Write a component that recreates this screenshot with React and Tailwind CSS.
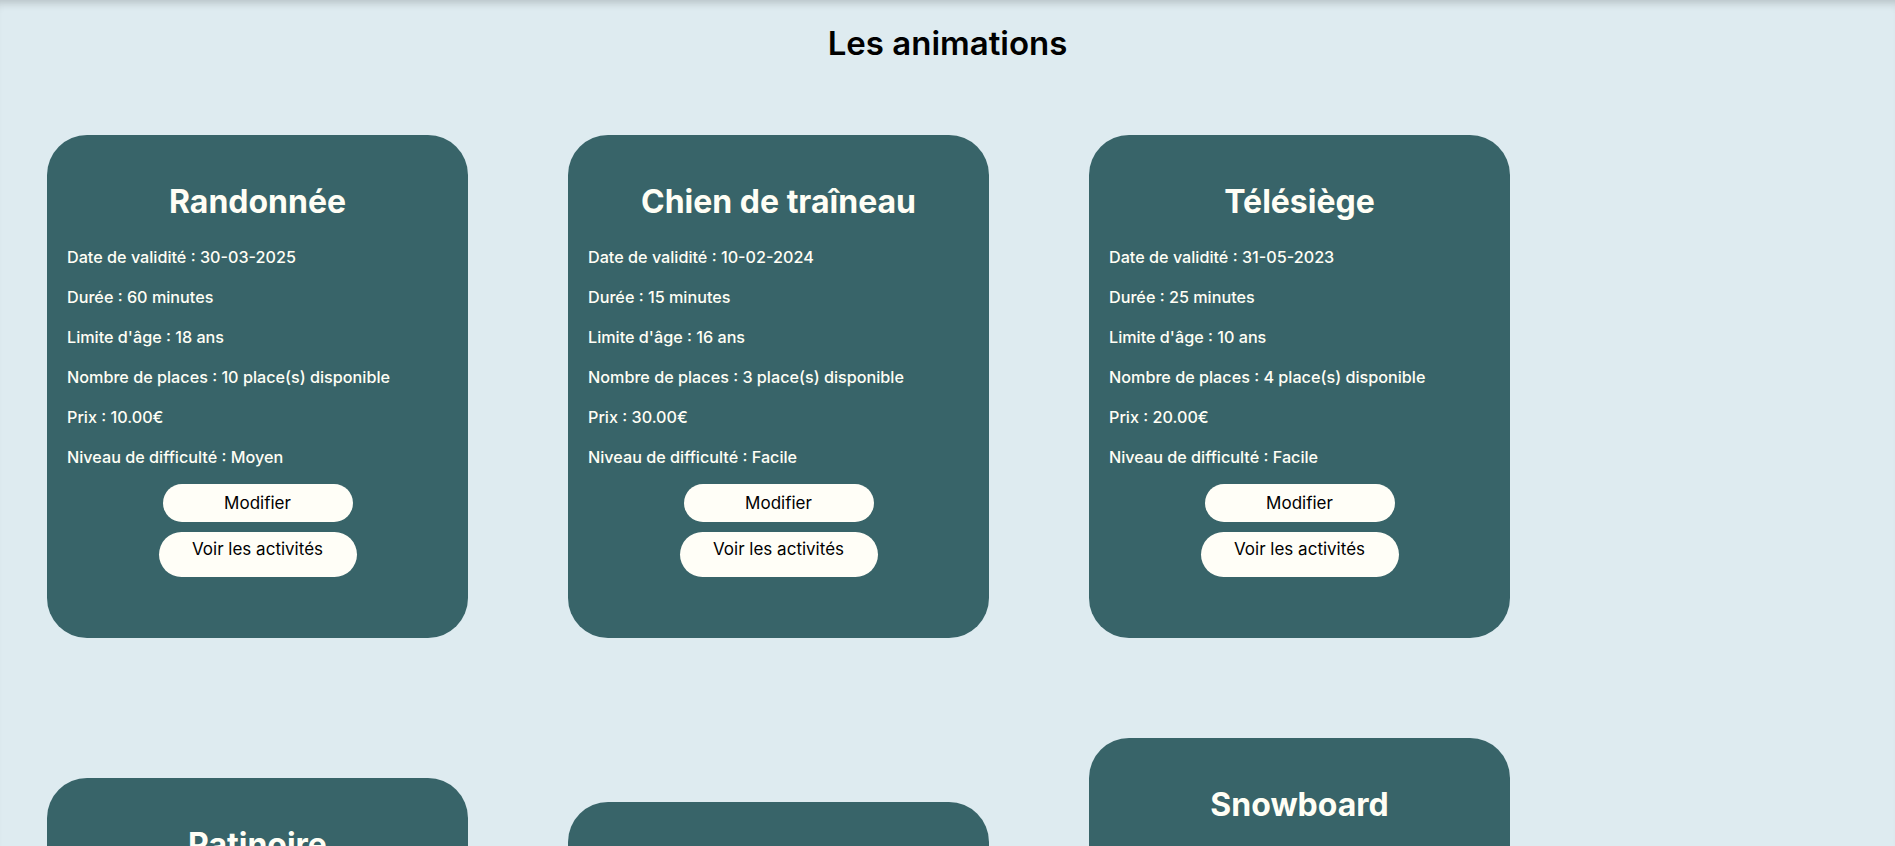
const animations = [
  {
    title: "Randonnée",
    lines: [
      "Date de validité : 30-03-2025",
      "Durée : 60 minutes",
      "Limite d'âge : 18 ans",
      "Nombre de places : 10 place(s) disponible",
      "Prix : 10.00€",
      "Niveau de difficulté : Moyen",
    ],
  },
  {
    title: "Chien de traîneau",
    lines: [
      "Date de validité : 10-02-2024",
      "Durée : 15 minutes",
      "Limite d'âge : 16 ans",
      "Nombre de places : 3 place(s) disponible",
      "Prix : 30.00€",
      "Niveau de difficulté : Facile",
    ],
  },
  {
    title: "Télésiège",
    lines: [
      "Date de validité : 31-05-2023",
      "Durée : 25 minutes",
      "Limite d'âge : 10 ans",
      "Nombre de places : 4 place(s) disponible",
      "Prix : 20.00€",
      "Niveau de difficulté : Facile",
    ],
  },
  {
    title: "Patinoire",
    lines: [
      "Date de validité : 15-01-2025",
      "Durée : 45 minutes",
      "Limite d'âge : 6 ans",
      "Nombre de places : 20 place(s) disponible",
      "Prix : 8.00€",
      "Niveau de difficulté : Facile",
    ],
  },
  {
    title: "",
    lines: [
      "Date de validité : 20-02-2025",
      "Durée : 30 minutes",
      "Limite d'âge : 12 ans",
      "Nombre de places : 6 place(s) disponible",
      "Prix : 15.00€",
      "Niveau de difficulté : Moyen",
    ],
  },
  {
    title: "Snowboard",
    lines: [
      "Date de validité : 01-03-2025",
      "Durée : 90 minutes",
      "Limite d'âge : 14 ans",
      "Nombre de places : 8 place(s) disponible",
      "Prix : 40.00€",
      "Niveau de difficulté : Difficile",
      "Matériel : fourni sur place",
      "Encadrement : moniteur diplômé",
    ],
  },
];

function AnimationCard({ animation }) {
  return (
    <div className="w-[421px] rounded-[40px] bg-[#386469] px-5 pt-[47px] pb-[61px] text-[#fffef5]">
      {animation.title && (
        <h2 className="mb-[23px] text-center text-[32px] font-bold leading-[40px]">{animation.title}</h2>
      )}
      {animation.lines.map((line) => (
        <p key={line} className="mt-4 text-[16.2px] font-medium leading-6">
          {line}
        </p>
      ))}
      <div className="mt-[15px] flex flex-col items-center gap-[10px]">
        <button className="h-[38px] w-[190px] rounded-full bg-[#fffef7] text-[17px] leading-[22px] text-black">
          Modifier
        </button>
        <button className="w-[198px] rounded-full bg-[#fffef7] pt-[7px] pb-[17px] text-[17px] leading-[21px] text-black">
          Voir les activités
        </button>
      </div>
    </div>
  );
}

export default function App() {
  return (
    <div
      className="min-h-screen bg-[#deebf0] shadow-[inset_0_9px_8px_-6px_rgba(0,0,0,0.18)]"
      style={{ fontFamily: "Inter, 'Liberation Sans', sans-serif" }}
    >
      <h1 className="pt-[23px] text-center text-[33px] font-semibold leading-[40px] text-black">Les animations</h1>

      {/* Cards */}
      <div className="mt-[72px] flex flex-wrap items-center gap-x-[100px] gap-y-[100px] pl-[47px] pb-[100px]">
        {animations.map((animation, i) => (
          <AnimationCard key={i} animation={animation} />
        ))}
      </div>
    </div>
  );
}
